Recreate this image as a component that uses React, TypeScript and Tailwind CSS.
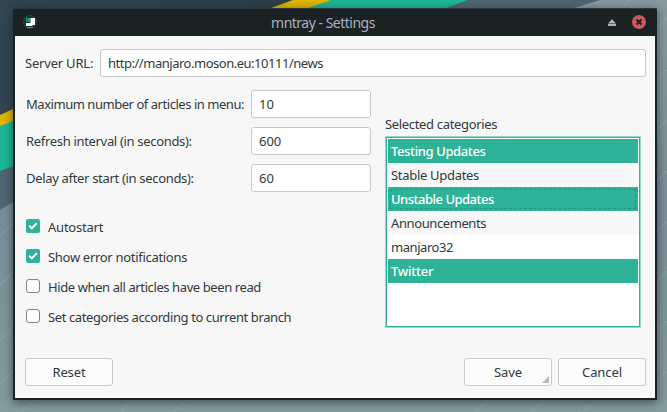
import React from "react";

function Wallpaper() {
  return (
    <svg className="absolute inset-0" width="667" height="412" viewBox="0 0 667 412">
      <defs>
        <linearGradient id="sky" x1="0" y1="0" x2="0" y2="1">
          <stop offset="0" stopColor="#87999f" />
          <stop offset="0.5" stopColor="#788d96" />
          <stop offset="1" stopColor="#839a9f" />
        </linearGradient>
        <linearGradient id="slate" x1="0" y1="0" x2="1" y2="0">
          <stop offset="0" stopColor="#314650" />
          <stop offset="1" stopColor="#2d3e47" />
        </linearGradient>
      </defs>
      <rect width="667" height="412" fill="url(#sky)" />
      <path d="M0 0H600L574 8L13 202L0 210Z" fill="#4f6570" />
      <path d="M0 0H468L446 8L0 171Z" fill="#1db795" />
      <path d="M0 0H331L308 8L0 126Z" fill="#e2b403" />
      <path d="M0 0H293L271 8L13 109L0 115Z" fill="url(#slate)" />
      <g stroke="#a3b2b7" strokeWidth="1" opacity="0.5">
        <path d="M-6 242L14 222M-6 291L14 271M-6 346L14 326M-5 389L13 371M22 412L34 400M120 412L132 400M174 412L186 400M475 412L487 400M531 412L543 400M583 412L595 400M657 28L668 17M657 80L668 69M657 130L668 119M657 181L668 170M657 231L668 220M657 281L668 270M657 331L668 320M657 381L668 370M622 8L630 0" />
      </g>
    </svg>
  );
}

function TitleBar() {
  return (
    <div className="flex h-7 items-center rounded-t-[2px] bg-[#1b2224] pr-[11px] pl-[10px] shadow-[inset_0_1px_0_#30393b]">
      <svg width="14" height="14" viewBox="0 0 14 14" className="shrink-0">
        <circle cx="7" cy="7" r="6.4" fill="#182b2c" stroke="#1d5951" />
        <path d="M3 3h1.5v4H3zM5 3h2v4H5zM4 12h6v1H4z" fill="#16a085" />
        <path d="M7.5 3H12v7h-2l-1 1H3V8h4.5z" fill="#fff" />
      </svg>
      <span className="flex-1 pt-[2px] pl-px text-center text-[14px] leading-[26px] tracking-[-0.5px] text-[#a9afc0]">
        mntray - Settings
      </span>
      <svg width="8" height="7" viewBox="0 0 8 7" className="mr-4 shrink-0">
        <path d="M4 0L8 4.5H0zM0 5h8v2H0z" fill="#a8b5b8" />
      </svg>
      <svg width="14" height="14" viewBox="0 0 14 14" className="shrink-0">
        <circle cx="7" cy="7" r="7" fill="#cc575d" />
        <path d="M4.5 4.5l5 5M9.5 4.5l-5 5" stroke="#1b2224" strokeWidth="2" />
      </svg>
    </div>
  );
}

function Field({ value, className }: { value: string; className: string }) {
  return (
    <input
      readOnly
      value={value}
      className={"h-7 rounded-[3px] border border-[#c8c9ca] bg-white px-[7px] outline-none " + className}
    />
  );
}

function CheckRow({ label, checked, spacing }: { label: string; checked?: boolean; spacing: string }) {
  return (
    <label className="flex h-[30px] items-center">
      {checked ? (
        <span className="mr-2 flex size-[14px] items-center justify-center rounded-[2px] bg-[#2eb398]">
          <svg width="10" height="8" viewBox="0 0 10 8">
            <path d="M1.2 3.8L3.8 6.3L8.8 1.3" fill="none" stroke="#fff" strokeWidth="2" />
          </svg>
        </span>
      ) : (
        <span className="mr-2 size-[14px] rounded-[3px] border border-[#788b85] bg-white" />
      )}
      <span className={"pt-[2px] " + spacing}>{label}</span>
    </label>
  );
}

function PushButton({ label, menu }: { label: string; menu?: boolean }) {
  return (
    <button className="relative h-7 w-[88px] rounded-[3px] border border-[#c8c9ca] bg-[#fcfcfc] tracking-[-0.1px]">
      {label}
      {menu && (
        <svg className="absolute right-[2px] bottom-[2px]" width="7" height="7" viewBox="0 0 7 7">
          <path d="M7 0V7H0Z" fill="#b8babb" />
        </svg>
      )}
    </button>
  );
}

const settings = [
  { label: "Maximum number of articles in menu:", value: "10", spacing: "tracking-[-0.46px]" },
  { label: "Refresh interval (in seconds):", value: "600", spacing: "tracking-[-0.32px]" },
  { label: "Delay after start (in seconds):", value: "60", spacing: "tracking-[-0.32px]" },
];

const selected = "bg-[#2eb398] text-white font-medium ";

const categories = [
  { name: "Testing Updates", look: selected + "tracking-[-0.38px]" },
  { name: "Stable Updates", look: "bg-[#f7f7f7] tracking-[-0.3px]" },
  { name: "Unstable Updates", look: selected + "tracking-[-0.5px]", focused: true },
  { name: "Announcements", look: "bg-[#f7f7f7] tracking-[-0.4px]" },
  { name: "manjaro32", look: "bg-white tracking-[-0.45px]" },
  { name: "Twitter", look: selected + "tracking-[-0.25px]" },
];

export default function App() {
  return (
    <div className="relative h-[412px] w-[667px] overflow-hidden pt-2 pl-[13px] font-['Noto_Sans',sans-serif] text-[13px] leading-[18px] whitespace-nowrap text-[#31393c]">
      <Wallpaper />
      <div className="relative flex h-[392px] w-[644px] flex-col rounded-t-[2px] bg-[#1b2224] shadow-[0_2px_10px_rgba(20,35,42,0.65)]">
        <TitleBar />
        <main className="mx-[2px] mb-[2px] flex flex-1 flex-col bg-[#f7f7f7] px-[10px] pt-[13px] pr-[9px]">
          <div className="flex h-7 items-center">
            <span className="w-[75px] tracking-[-0.2px]">Server URL:</span>
            <Field value="http://manjaro.moson.eu:10111/news" className="flex-1 tracking-[-0.48px]" />
          </div>
          <div className="flex">
            <section className="w-[360px] pt-[13px] pl-px">
              <div className="flex flex-col gap-[9px]">
                {settings.map((s) => (
                  <div key={s.label} className="flex h-7 items-center">
                    <span className={"w-[225px] " + s.spacing}>{s.label}</span>
                    <Field value={s.value} className="w-[120px]" />
                  </div>
                ))}
              </div>
              <div className="pt-[19px]">
                <CheckRow label="Autostart" spacing="tracking-[-0.22px]" checked />
                <CheckRow label="Show error notifications" spacing="tracking-[-0.3px]" checked />
                <CheckRow label="Hide when all articles have been read" spacing="tracking-[-0.4px]" />
                <CheckRow label="Set categories according to current branch" spacing="tracking-[-0.4px]" />
              </div>
            </section>
            <section className="w-[256px] pt-[38px]">
              <div className="h-[21px] tracking-[-0.33px]">Selected categories</div>
              <div className="h-[192px] border border-[#94d8cb]">
                <div className="h-full border border-[#2eb398] bg-white p-px">
                  {categories.map((c) => (
                    <div key={c.name} className={"h-6 " + c.look}>
                      <div
                        className={
                          "flex h-full items-center pl-[3px] " +
                          (c.focused
                            ? "outline-1 -outline-offset-3 outline-dashed outline-[#27967f]"
                            : "")
                        }
                      >
                        {c.name}
                      </div>
                    </div>
                  ))}
                </div>
              </div>
            </section>
          </div>
          <div className="mt-auto mb-3 flex">
            <PushButton label="Reset" />
            <div className="ml-auto flex gap-[6px]">
              <PushButton label="Save" menu />
              <PushButton label="Cancel" />
            </div>
          </div>
        </main>
      </div>
    </div>
  );
}
